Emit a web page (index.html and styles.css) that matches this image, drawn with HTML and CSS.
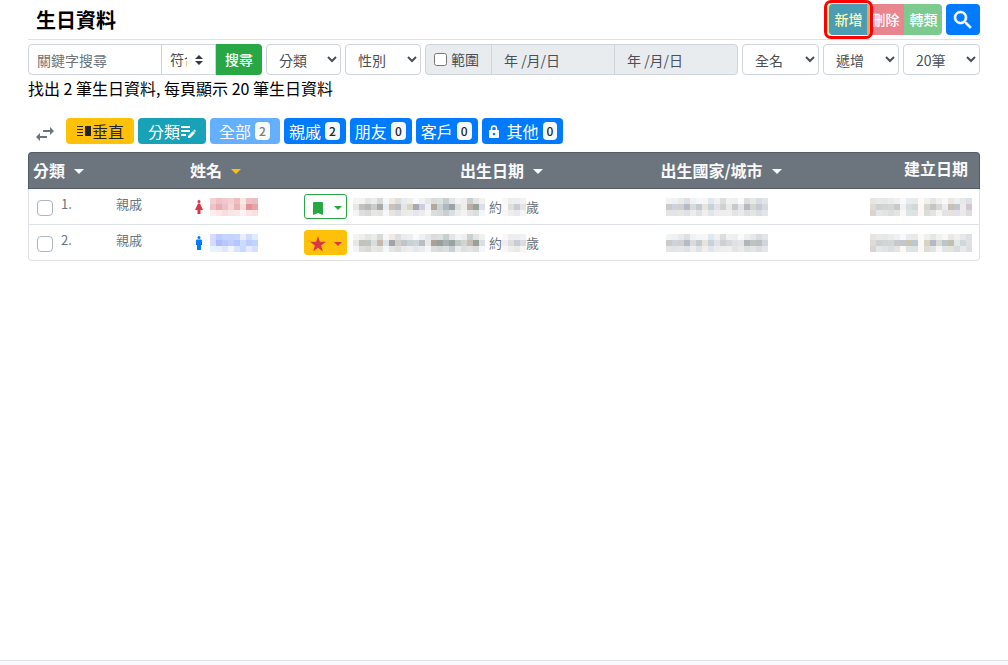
FILE: index.html
```html
<!DOCTYPE html>
<html lang="zh-Hant">
<head>
<meta charset="utf-8">
<meta name="viewport" content="width=device-width, initial-scale=1">
<title>生日資料</title>
<link rel="stylesheet" href="styles.css">
</head>
<body>
<main class="container">
  <header class="page-head">
    <h1 class="title">生日資料</h1>
    <div class="actions">
      <div class="btn-group">
        <div class="spotlight"><button class="btn primary" type="button">新增</button></div>
        <button class="btn danger" type="button" disabled>刪除</button>
        <button class="btn success" type="button" disabled>轉類</button>
      </div>
      <button class="btn primary search-toggle" type="button" aria-label="搜尋">
        <svg width="24" height="24" viewBox="0 0 24 24" fill="currentColor" stroke="currentColor" stroke-width=".6"><path d="M15.500 14h-.79l-.28-.27A6.470 6.470 0 0 0 16 9.500 6.500 6.500 0 1 0 9.500 16c1.610 0 3.090-.59 4.230-1.570l.27.28v.79l5 4.990L20.490 19l-4.990-5zm-6 0C7.010 14 5 11.990 5 9.500S7.010 5 9.500 5 14 7.010 14 9.500 11.990 14 9.500 14z"/></svg>
      </button>
    </div>
  </header>

  <form class="filters">
    <div class="input-group">
      <input class="control keyword" type="text" placeholder="關鍵字搜尋" aria-label="關鍵字搜尋">
      <select class="control custom-select" aria-label="比對方式"><option>符合</option></select>
      <button class="btn search" type="button">搜尋</button>
    </div>
    <select class="control" aria-label="分類"><option>分類</option></select>
    <select class="control" aria-label="性別"><option>性別</option></select>
    <div class="input-group">
      <label class="addon"><input type="checkbox">範圍</label>
      <input class="control date" type="text" value="年 /月/日" aria-label="開始日期" disabled>
      <input class="control date" type="text" value="年 /月/日" aria-label="結束日期" disabled>
    </div>
    <select class="control" aria-label="排序欄位"><option>全名</option></select>
    <select class="control" aria-label="排序方向"><option>遞增</option></select>
    <select class="control" aria-label="每頁筆數"><option>20筆</option></select>
  </form>

  <p class="summary">找出 2 筆生日資料, 每頁顯示 20 筆生日資料</p>

  <nav class="tabs">
    <button class="swap" type="button" aria-label="切換">
      <svg width="18" height="14" viewBox="0 0 18 14" fill="currentColor"><path d="M4 6 0 10l4 4v-3h7V9H4zM18 4l-4-4v3H7v2h7v3z"/></svg>
    </button>
    <button class="tab warning" type="button">
      <svg width="16" height="16" viewBox="0 0 16 16" fill="currentColor"><path d="M1 3h6v1H1zM1 6h6v1H1zM1 9h6v1H1zM1 12h6v1H1zM9 3h6v10H9z"/></svg>垂直
    </button>
    <button class="tab info" type="button">分類<svg width="16" height="16" viewBox="0 0 16 16" fill="currentColor"><path d="M1 3h9v2H1zM1 7h9v2H1zM1 11h5v2H1zM8 13l5-5 2 2-5 5H8zM13.500 7.500l1-1L16 8l-1 1z"/></svg>
    </button>
    <button class="tab primary" type="button" disabled>全部 <span class="badge">2</span></button>
    <button class="tab primary" type="button">親戚 <span class="badge">2</span></button>
    <button class="tab primary" type="button">朋友 <span class="badge">0</span></button>
    <button class="tab primary" type="button">客戶 <span class="badge">0</span></button>
    <button class="tab primary" type="button">
      <svg class="lock" width="14" height="16" viewBox="0 0 14 16"><path d="M4.500 8V5.500a2.500 2.500 0 0 1 5 0V8" fill="none" stroke="currentColor" stroke-width="1.500"/><path fill="currentColor" fill-rule="evenodd" d="M3 7h8a1 1 0 0 1 1 1v6a1 1 0 0 1-1 1H3a1 1 0 0 1-1-1V8a1 1 0 0 1 1-1zM7 9.700a1.300 1.300 0 1 0 .01 0z"/></svg>
      其他 <span class="badge">0</span></button>
  </nav>

  <div class="table-card">
    <table>
      <colgroup><col class="c-check"><col class="c-kind"><col class="c-name"><col class="c-mark"><col class="c-birth"><col class="c-city"><col class="c-made"></colgroup>
      <thead>
        <tr>
          <th colspan="2">分類<span class="caret"></span></th>
          <th colspan="2">姓名<span class="caret active"></span></th>
          <th class="center">出生日期<span class="caret"></span></th>
          <th class="center">出生國家/城市<span class="caret"></span></th>
          <th class="end">建立日期</th>
        </tr>
      </thead>
      <tbody>
        <tr>
          <td><label class="pick-row"><input type="checkbox">1.</label></td>
          <td>親戚</td>
          <td><div class="line name">
            <svg width="10" height="16" viewBox="0 0 10 16" fill="#dc3545"><circle cx="5" cy="2.500" r="1.500"/><path d="M4 4.500h2L9 11H6.500v4h-3v-4H1z"/></svg>
            <span class="mosaic" data-cells="f3cfcf efc0c4 efc9cc f1d0d0 eebcc1 f8e9e3 eec0c4 e9bdc1|efc2c4 e8adb2 edc1c4 f3d5d7 e9b2b3 f7dfdc e38f9c e6a4a6|fbefef fbe7e7 f7dfdf f8e5e6 fae7e8 fdf3f3 f8e5e5 f8dfe0"></span></div></td>
          <td><button class="mark" type="button" aria-label="書籤">
            <svg width="16" height="16" viewBox="0 0 16 16" fill="currentColor"><path d="M3 3a1 1 0 0 1 1-1h8a1 1 0 0 1 1 1v12l-5-2-5 2z"/></svg><span class="caret small"></span></button></td>
          <td><div class="line birth"><span class="mosaic" data-cells="f4f4f3 f3f3f2 e4e6e3 e9edec d9d9da f8f8f8 f1e9e4 dedfdd e9ecee eeeeec f8faff eff2ee e4e8e7 dcdcdc d9e2df c8cdcd e4e5e6 f3f3f3 eeeeec cacfd0 e4e4e4 f1f1ef|e7e7e6 c2c1bb b8b8b6 c8ccce a8a9a9 e6edf4 d0c0b5 b6bec7 e5e5e4 dad5bf aaa8b5 cdcce0 f0f0f4 b1a8a0 cad2d5 aeb6bf 99a4a5 dedede edeeeb b9afa6 98a19c dedeea|f4f4f4 dedede d9d9d8 e7e7e6 e4e4e2 f6f7f9 e4e5e4 dedede eaeaea ededed e4e8ec ebebf0 f6f6f6 dbdddf d6dbd9 c8cfd1 d9dee0 ececef f3f3f3 e4e4e4 dbdddf f3f6ff"></span>
            <span class="age">約<span class="mosaic" data-cells="f8f8f8 eeeeee eceeef f2f2f2|fafafa dedede c9cdd1 e2e4e7|f6f6f6 eeeeee e9e9e9 f5f5f5"></span>歲</span></div></td>
          <td><div class="line city"><span class="mosaic" data-cells="f2f3f3 eff2f2 e8ebea dddfe0 eff1f3 f2f7fb faf4f2 dceaf0 f0f0f0 dcdede f1f1f1 edf0f0 fafafa dcdfde e7e8e8 d9dde2 e2e4e7|cbcbcc cdd3dc d0d0cf b5bbc5 d8dadc c3cbce e9e3de c4d3dc e0e2e5 cfd1d1 e8e9e9 c7cacb e2e4e7 b4bac3 d4d6d2 c4c9d2 d4d8df|e4e5e6 e2e4e5 e5e6e6 dee1e5 ededed dfe2e4 f1eeec e0e6e8 eaecee eeeeee efefef e3e4e4 eaeaea dee0e3 e4e6e5 dadee3 e2e5e9"></span></div></td>
          <td class="end"><div class="line"><span class="mosaic" data-cells="e7e5e4 e8e9e8 e7e7e7 eaebeb f0f0f0 f7f9fd e9ebee e8e9e9 fbfaf8 f0f0f0 e5e7e4 f1f1f1 f8f8f7 e9e8e6 f0f0f1 e7e8e8 dee0e3|e2d9d4 cbd3d1 d0d5d4 d4d6d7 c8caca eef2f4 d7dee0 d0d9d8 fbf8f4 d8d7cf c7c5c2 d7d7d5 e9edf0 cbbfb2 bec6d0 ecebee d2c6d0|d8d4d2 e4e7e7 e2e3e3 dcdfe0 e4e4e4 faf7f4 dce4e5 dde3e2 faf7f4 dddcd7 e3e3e3 f7f5f2 dfe4e7 e5e2de dfe3e7 eaeaec dedce1"></span></div></td>
        </tr>
        <tr>
          <td><label class="pick-row"><input type="checkbox">2.</label></td>
          <td>親戚</td>
          <td><div class="line name">
            <svg width="10" height="16" viewBox="0 0 10 16" fill="#007bff"><circle cx="5" cy="2.500" r="1.500"/><path d="M3 4.500h4a1 1 0 0 1 1 1V10H7v5H3v-5H2V5.500a1 1 0 0 1 1-1z"/></svg>
            <span class="mosaic" data-cells="d6dcff bdcbff c4d4ff c3d2ff c8d6ff e9edff d1d9ff e0ebff|d6dcff adbcff b9c7fb bdceff b4c5ff cbdcff bdcbff c1d3ff|e6f2ff e9efff dfe7ff f1f5ff d7e3ff c8d8ff e4ecff d7dfff"></span></div></td>
          <td><button class="mark star" type="button" aria-label="星號">
            <svg width="16" height="16" viewBox="0 0 16 16" fill="currentColor"><path d="m8 0 1.900 5.800H16l-4.900 3.700 1.800 5.900L8 11.800l-4.900 3.600 1.800-5.900L0 5.800h6.100z"/></svg><span class="caret small"></span></button></td>
          <td><div class="line birth"><span class="mosaic" data-cells="f4f4f3 eeeeed e4e6e3 e9edec d9d9da f8f8f8 f1e9e4 dedfdd e9ecee eeeeec f8faff eff2ee e4e8e7 dcdcdc d9e2df c8cdcd e4e5e6 f3f3f3 eeeeec cacfd0 e4e4e4 f1f1ef|e7e7e6 c2c1bb c3c3bf dadddd c8b9ad dbe5ee a3a5a4 d1cfc7 bdc7cb c8d2d5 ccd5da b9bfc0 e8e8e8 aaa197 97a09b a9aeb7 98a39f bfc7c5 d0d3cf c9bbb0 98a29c dcdce7|f4f4f4 dedede d9d9d8 e7e7e6 e4e4e2 f6f7f9 e4e5e4 dedede eaeaea ededed e4e8ec ebebf0 f6f6f6 dbdddf d6dbd9 dadfdf c8cfd1 ececef dce0e2 e4e4e4 dbdddf f3f6ff"></span>
            <span class="age">約<span class="mosaic" data-cells="f8f8f8 eeeeee eceeef f2f2f2|eeeeee dedede c9cdd1 d9dce1|f6f6f6 eeeeee e9e9e9 f5f5f5"></span>歲</span></div></td>
          <td><div class="line city"><span class="mosaic" data-cells="f2f3f3 eff2f2 e8ebea dddfe0 eff1f3 f2f7fb faf4f2 dceaf0 f0f0f0 dcdede f1f1f1 edf0f0 fafafa eeeeee e7e8e8 d9dde2 e2e4e7|cbcbcc cdd3dc d0d0cf b5bbc5 d8dadc c3cbce e9e3de c4d3dc e0e2e5 cfd1d1 d5d9de dfe1e2 e2e4e7 b0b5b8 bdc3c0 b9bfc2 d0d4dc|e4e5e6 e2e4e5 e5e6e6 dee1e5 ededed dfe2e4 f1eeec e0e6e8 eaecee eeeeee efefef e3e4e4 eaeaea dee0e3 e4e6e5 dadee3 e2e5e9"></span></div></td>
          <td class="end"><div class="line"><span class="mosaic" data-cells="e7e5e4 e8e9e8 e7e7e7 eaebeb f0f0f0 f7f9fd e9ebee e8e9e9 fbfaf8 f0f0f0 e5e7e4 f1f1f1 f8f8f7 e9e8e6 f0f0f1 e7e8e8 dee0e3|e2d9d4 cbd3d1 d0d5d4 d4d6d7 c8caca c3c7cd c9c6b2 bac8d3 fbf8f4 d9d3bd b5b9c5 d7dadc bec5c6 c0c0b1 e2e7ea d0d8d9 dfe1e5|d8d4d2 e4e7e7 e2e3e3 dcdfe0 e4e4e4 faf7f4 dce4e5 dde3e2 faf7f4 dddcd7 e3e3e3 f7f5f2 dfe4e7 e5e2de d8dcdc eaeaec dedfe2"></span></div></td>
        </tr>
      </tbody>
    </table>
  </div>
</main>
<footer class="footer"></footer>
<script src="mosaic.js"></script>
</body>
</html>
```

FILE: styles.css
```css
* { box-sizing: border-box; }

body {
  margin: 0;
  min-height: 100vh;
  display: flex;
  flex-direction: column;
  background: #fff;
  color: #000;
  font: 16px/24px "Noto Sans CJK TC", sans-serif;
}

button, input, select { font: inherit; margin: 0; }

.container { flex: 1; padding: 0 28px; }

.page-head {
  display: flex;
  justify-content: space-between;
  align-items: center;
  height: 40px;
  border-bottom: 1px solid #dee2e6;
}
.title { margin: 0; padding-left: 8px; font-size: 20px; line-height: 24px; font-weight: 700; }
.actions, .btn-group { display: flex; }
.actions { gap: 4px; }

.btn {
  height: 31px;
  padding: 0 4px;
  border: 1px solid transparent;
  color: #fff;
  font-size: 14px;
  font-weight: 500;
  line-height: 21px;
}
.primary { background: #007bff; }
.danger { background: #dc3545; }
.success { background: #28a745; }
.btn:disabled, .tab:disabled { opacity: .6; }
.btn-group .btn { width: 38px; padding: 0 3px 0 4px; }
.btn-group .danger { margin-left: -1px; }
.btn-group .success { border-radius: 0 4px 4px 0; }
.spotlight { position: relative; z-index: 1; }
.spotlight .btn { border-radius: 4px 0 0 4px; }
.spotlight::after {
  content: "";
  position: absolute;
  inset: -4px -6px -4px -5px;
  border: 3px solid #f00;
  border-radius: 7px;
  background: rgba(255, 235, 0, .3);
  pointer-events: none;
}
.search-toggle { width: 34px; border-radius: 4px; display: grid; place-items: center; }

.filters {
  display: grid;
  grid-template-columns: minmax(0, 234fr) minmax(0, 75fr) minmax(0, 76fr) minmax(0, 313fr) minmax(0, 77fr) minmax(0, 76fr) minmax(0, 77fr);
  gap: 4px;
  margin-top: 4px;
}
.control {
  height: 31px;
  min-width: 0;
  padding: 4px 8px;
  border: 1px solid #ced4da;
  border-radius: 4px;
  background-color: #fff;
  color: #495057;
  font-size: 14px;
  line-height: 21px;
}
.control::placeholder { color: #6c757d; opacity: 1; }
.input-group { display: flex; min-width: 0; }
.keyword { flex: 1; width: 0; border-radius: 4px 0 0 4px; }
.custom-select {
  appearance: none;
  width: 55px;
  margin-left: -1px;
  padding: 4px 28px 4px 8px;
  border-radius: 0;
  background: #fff url("data:image/svg+xml,%3csvg xmlns='http://www.w3.org/2000/svg' width='4' height='5' viewBox='0 0 4 5'%3e%3cpath fill='%23343a40' d='M2 0L0 2h4zm0 5L0 3h4z'/%3e%3c/svg%3e") right 12px center / 8px 10px no-repeat;
}
.search { width: 46px; background: #28a745; border-radius: 0 4px 4px 0; }
.addon {
  display: flex;
  align-items: center;
  gap: 4px;
  width: 67px;
  padding: 0 8px;
  border: 1px solid #ced4da;
  border-radius: 4px 0 0 4px;
  background: #e9ecef;
  color: #495057;
  font-size: 14px;
  line-height: 21px;
  white-space: nowrap;
}
.date { flex: 1; width: 0; margin-left: -1px; padding-left: 12px; border-radius: 0; background: #e9ecef; }
.date:last-child { border-radius: 0 4px 4px 0; }

.summary { margin: 1px 0 0; }

.tabs { display: flex; gap: 4px; margin-top: 18px; align-items: center; }
.swap { width: 34px; height: 26px; padding: 6px 0 0; border: 0; background: none; color: #6c757d; display: grid; place-items: center; }
.tab {
  display: flex;
  align-items: center;
  justify-content: center;
  gap: 4px;
  height: 26px;
  padding: 0 6px 0 5px;
  border: 0;
  border-radius: 4px;
  color: #fff;
  white-space: nowrap;
}
.warning { background: #ffc107; color: #212529; }
.info { background: #17a2b8; }
.warning, .info { width: 68px; gap: 0; padding: 0; }
.tab:disabled { width: 70px; }
.lock { margin-right: 2px; }
.badge {
  padding: 3px 4px;
  border-radius: 4px;
  background: #f8f9fa;
  color: #212529;
  font-size: 12px;
  line-height: 12px;
  font-weight: 500;
}

.table-card { margin-top: 8px; }
table { width: 100%; table-layout: fixed; border-collapse: separate; border-spacing: 0; }
.c-check { width: 84px; }
.c-kind { width: 74px; }
.c-name { width: 114px; }
.c-mark { width: 49px; }
.c-birth { width: 305px; }
.c-city { width: 134px; }
th {
  height: 37px;
  padding: 0 4px 2px;
  border: 0 solid #545b62;
  border-width: 1px 0;
  background: #6c757d;
  color: #f8f9fa;
  font-weight: 700;
  text-align: left;
  white-space: nowrap;
}
th:first-child { border-left-width: 1px; border-top-left-radius: 4px; }
th:last-child { border-right-width: 1px; border-top-right-radius: 4px; }
th.center { text-align: center; }
th.end { padding: 0 11px 6px 0; }
.end { text-align: right; }
.caret {
  display: inline-block;
  margin-left: 9px;
  border: 5px solid transparent;
  border-top-color: currentColor;
  border-bottom: 0;
  vertical-align: 3px;
}
.caret.active { color: #ffc107; }
.caret.small { margin-left: 0; border-width: 4px 4px 0; }
td {
  height: 36px;
  padding: 0 4px;
  border: 0 solid #dee2e6;
  border-bottom-width: 1px;
  color: #6c757d;
  font-size: 13px;
  line-height: 20px;
}
td:first-child { border-left-width: 1px; }
td:last-child { border-right-width: 1px; }
tr:last-child td:first-child { border-bottom-left-radius: 4px; }
tr:last-child td:last-child { border-bottom-right-radius: 4px; }
td:nth-child(2) { padding-bottom: 6px; }
.pick-row { display: flex; align-items: flex-start; gap: 8px; padding: 0 0 4px 4px; }
.pick-row input {
  appearance: none;
  width: 16px;
  height: 16px;
  margin-top: 6px;
  border: 1px solid #adb5bd;
  border-radius: 4px;
}
.line { display: flex; align-items: center; gap: 6px; }
.name { padding-left: 4px; }
.birth { gap: 4px; }
.city { padding-left: 8px; }
.end .line { justify-content: flex-end; }
td.end { padding-right: 7px; }
.age { display: flex; align-items: center; }
.mosaic { display: grid; grid-auto-rows: 6px; }
.mark {
  display: flex;
  align-items: center;
  justify-content: space-between;
  width: 43px;
  height: 25px;
  padding: 2px 4px 0 5px;
  border: 1px solid #28a745;
  border-radius: 3px;
  background: #fff;
  color: #28a745;
}
.mark.star { border-color: #ffc107; background: #ffc107; color: #dc3545; }

.footer { height: 5px; border-top: 1px solid #dee2e6; background: #f8f9fa; }
```

FILE: mosaic.js
```js
// Fills each masked value with a grid of coloured cells; rows are separated by "|".
document.querySelectorAll('.mosaic').forEach((el) => {
  const rows = el.dataset.cells.split('|').map((row) => row.split(' '));
  el.style.gridTemplateColumns = `repeat(${rows[0].length}, 6px)`;
  rows.flat().forEach((color) => {
    const cell = document.createElement('i');
    cell.style.background = `#${color}`;
    el.append(cell);
  });
});
```
